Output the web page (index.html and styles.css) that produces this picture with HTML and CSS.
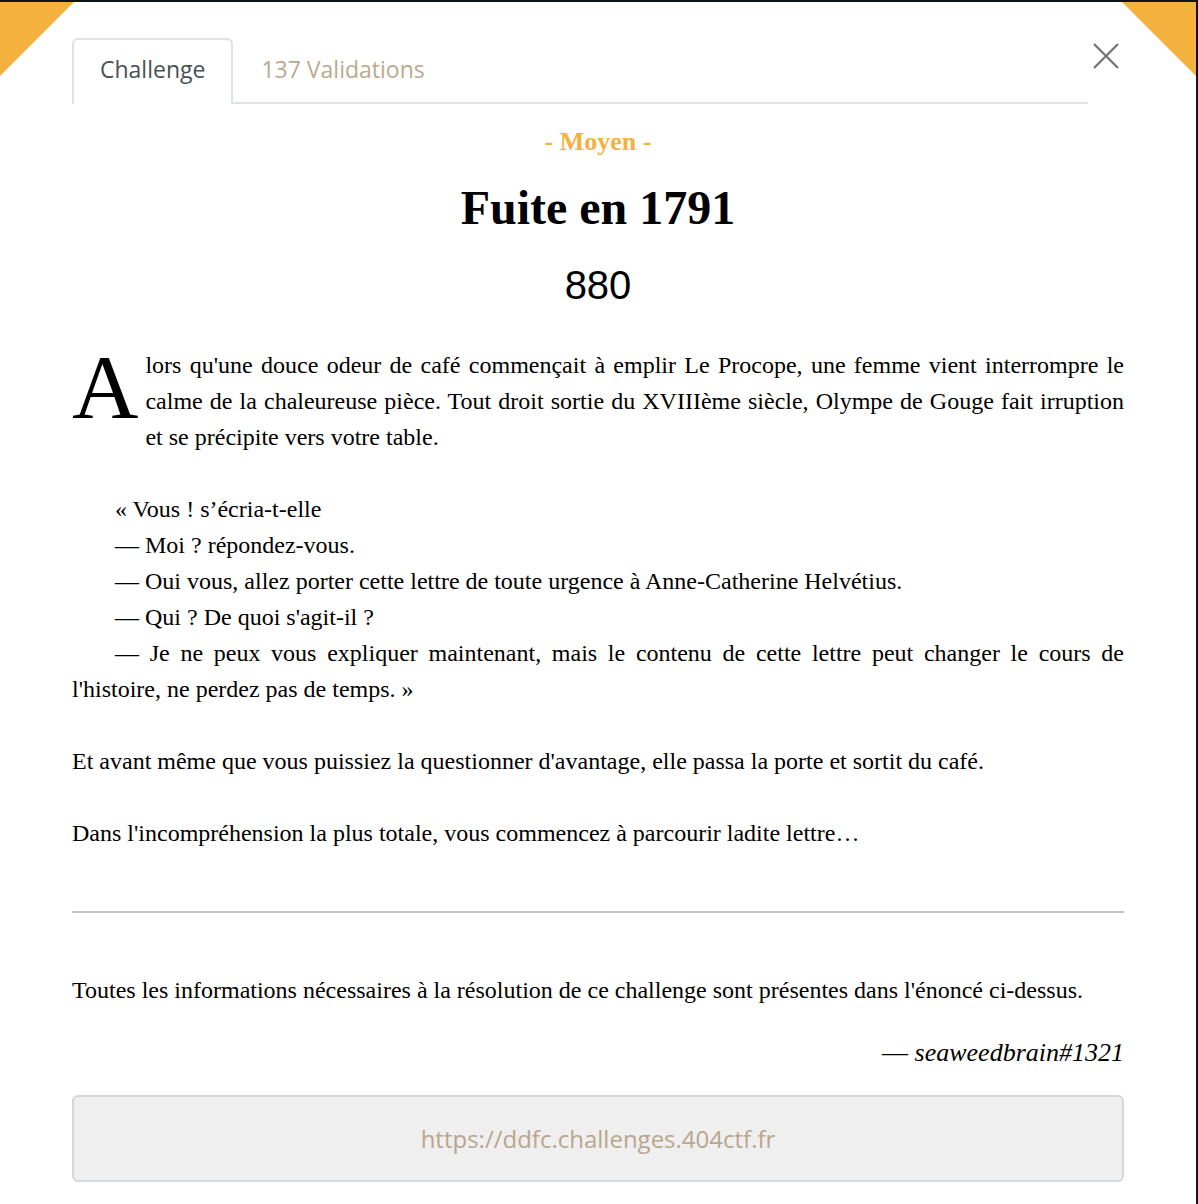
FILE: index.html
```html
<!DOCTYPE html>
<html lang="fr">
<head>
<meta charset="utf-8">
<title>Fuite en 1791</title>
<link rel="stylesheet" href="styles.css">
</head>
<body>
<div class="modal">
  <div class="corner corner-tl"></div>
  <div class="corner corner-tr"></div>
  <div class="modal-header">
    <ul class="tabs">
      <li class="tab active">Challenge</li>
      <li class="tab">137 Validations</li>
    </ul>
    <button class="close" aria-label="Fermer">
      <svg width="26" height="26" viewBox="0 0 26 26"><path d="M1 1 L25 25 M25 1 L1 25" stroke="#777" stroke-width="2.4" fill="none"/></svg>
    </button>
  </div>
  <div class="modal-body">
    <div class="difficulty">- Moyen -</div>
    <h1 class="title">Fuite en 1791</h1>
    <div class="points">880</div>
    <div class="description">
      <p class="intro"><span class="dropcap">A</span>lors qu'une douce odeur de café commençait à emplir Le Procope, une femme vient interrompre le calme de la chaleureuse pièce. Tout droit sortie du XVIIIème siècle, Olympe de Gouge fait irruption et se précipite vers votre table.</p>
      <div class="dialog">
        <p>« Vous ! s’écria-t-elle</p>
        <p>— Moi ? répondez-vous.</p>
        <p>— Oui vous, allez porter cette lettre de toute urgence à Anne-Catherine Helvétius.</p>
        <p>— Qui ? De quoi s'agit-il ?</p>
        <p>— Je ne peux vous expliquer maintenant, mais le contenu de cette lettre peut changer le cours de l'histoire, ne perdez pas de temps. »</p>
      </div>
      <p>Et avant même que vous puissiez la questionner d'avantage, elle passa la porte et sortit du café.</p>
      <p>Dans l'incompréhension la plus totale, vous commencez à parcourir ladite lettre…</p>
    </div>
    <hr class="sep">
    <p class="note">Toutes les informations nécessaires à la résolution de ce challenge sont présentes dans l'énoncé ci-dessus.</p>
    <p class="author">— <em>seaweedbrain#1321</em></p>
    <div class="url">https://ddfc.challenges.404ctf.fr</div>
  </div>
</div>
</body>
</html>
```

FILE: styles.css
```css
html, body {
  margin: 0;
  padding: 0;
}
body {
  background: #0e141b;
  padding-top: 2px;
  height: 1202px;
  overflow: hidden;
  font-family: "Liberation Serif", "Times New Roman", serif;
  color: #000;
}
.modal {
  position: relative;
  width: 1196px;
  height: 1202px;
  background: #fff;
  box-sizing: border-box;
  padding: 36px 72px 0 72px;
}
.corner {
  position: absolute;
  top: 0;
  width: 74px;
  height: 74px;
  background: #f4b13e;
}
.corner-tl {
  left: 0;
  clip-path: polygon(0 0, 100% 0, 0 100%);
}
.corner-tr {
  right: 0;
  clip-path: polygon(0 0, 100% 0, 100% 100%);
}
.modal-header {
  display: flex;
  align-items: flex-start;
}
.tabs {
  list-style: none;
  margin: 0;
  padding: 0;
  display: flex;
  width: 1016px;
  border-bottom: 2px solid #dee2e6;
}
.tab {
  font-family: "Open Sans", "Noto Sans", sans-serif;
  font-size: 23px;
  height: 62px;
  line-height: 58px;
  padding: 0 26px;
  color: #bba98f;
  border: 2px solid transparent;
  border-bottom: 0;
  border-radius: 6px 6px 0 0;
  margin-bottom: -2px;
}
.tab.active {
  color: #495057;
  border-color: #dee2e6;
  background: #fff;
  height: 64px;
}
.close {
  margin-left: 5px;
  margin-top: 5px;
  padding: 0;
  border: 0;
  background: none;
  width: 26px;
  height: 26px;
  display: flex;
}
.modal-body {
  width: 1052px;
}
.difficulty {
  text-align: center;
  color: #f4b13e;
  font-weight: bold;
  font-size: 26px;
  line-height: 30px;
  margin-top: 23px;
}
.title {
  text-align: center;
  font-size: 48px;
  line-height: 56px;
  margin: 23px 0 0 0;
  font-weight: bold;
}
.points {
  text-align: center;
  font-family: "Liberation Sans", Arial, sans-serif;
  font-size: 40px;
  line-height: 50px;
  margin-top: 24px;
}
.description {
  margin-top: 37px;
  font-size: 24px;
  line-height: 36px;
  text-align: justify;
}
.description p {
  margin: 0 0 36px 0;
}
.dropcap {
  float: left;
  font-size: 92px;
  line-height: 80px;
  height: 80px;
  margin-right: 7px;
}
.dialog {
  margin-bottom: 36px;
}
.dialog p {
  margin: 0;
  text-indent: 43px;
}
.description p:last-child {
  margin-bottom: 0;
}
.sep {
  border: 0;
  border-top: 2px solid #c3c3c3;
  margin: 60px 0 0 0;
  height: 0;
}
.note {
  font-size: 24px;
  line-height: 36px;
  margin: 59px 0 0 0;
}
.author {
  text-align: right;
  font-size: 26px;
  line-height: 36px;
  margin: 27px 0 0 0;
}
.author em {
  font-style: italic;
}
.url {
  margin-top: 24px;
  height: 87px;
  box-sizing: border-box;
  background: #efefef;
  border: 2px solid #d4d7db;
  border-radius: 6px;
  display: flex;
  align-items: center;
  justify-content: center;
  font-family: "Open Sans", "Noto Sans", sans-serif;
  font-size: 24px;
  color: #b9a68d;
}
```
